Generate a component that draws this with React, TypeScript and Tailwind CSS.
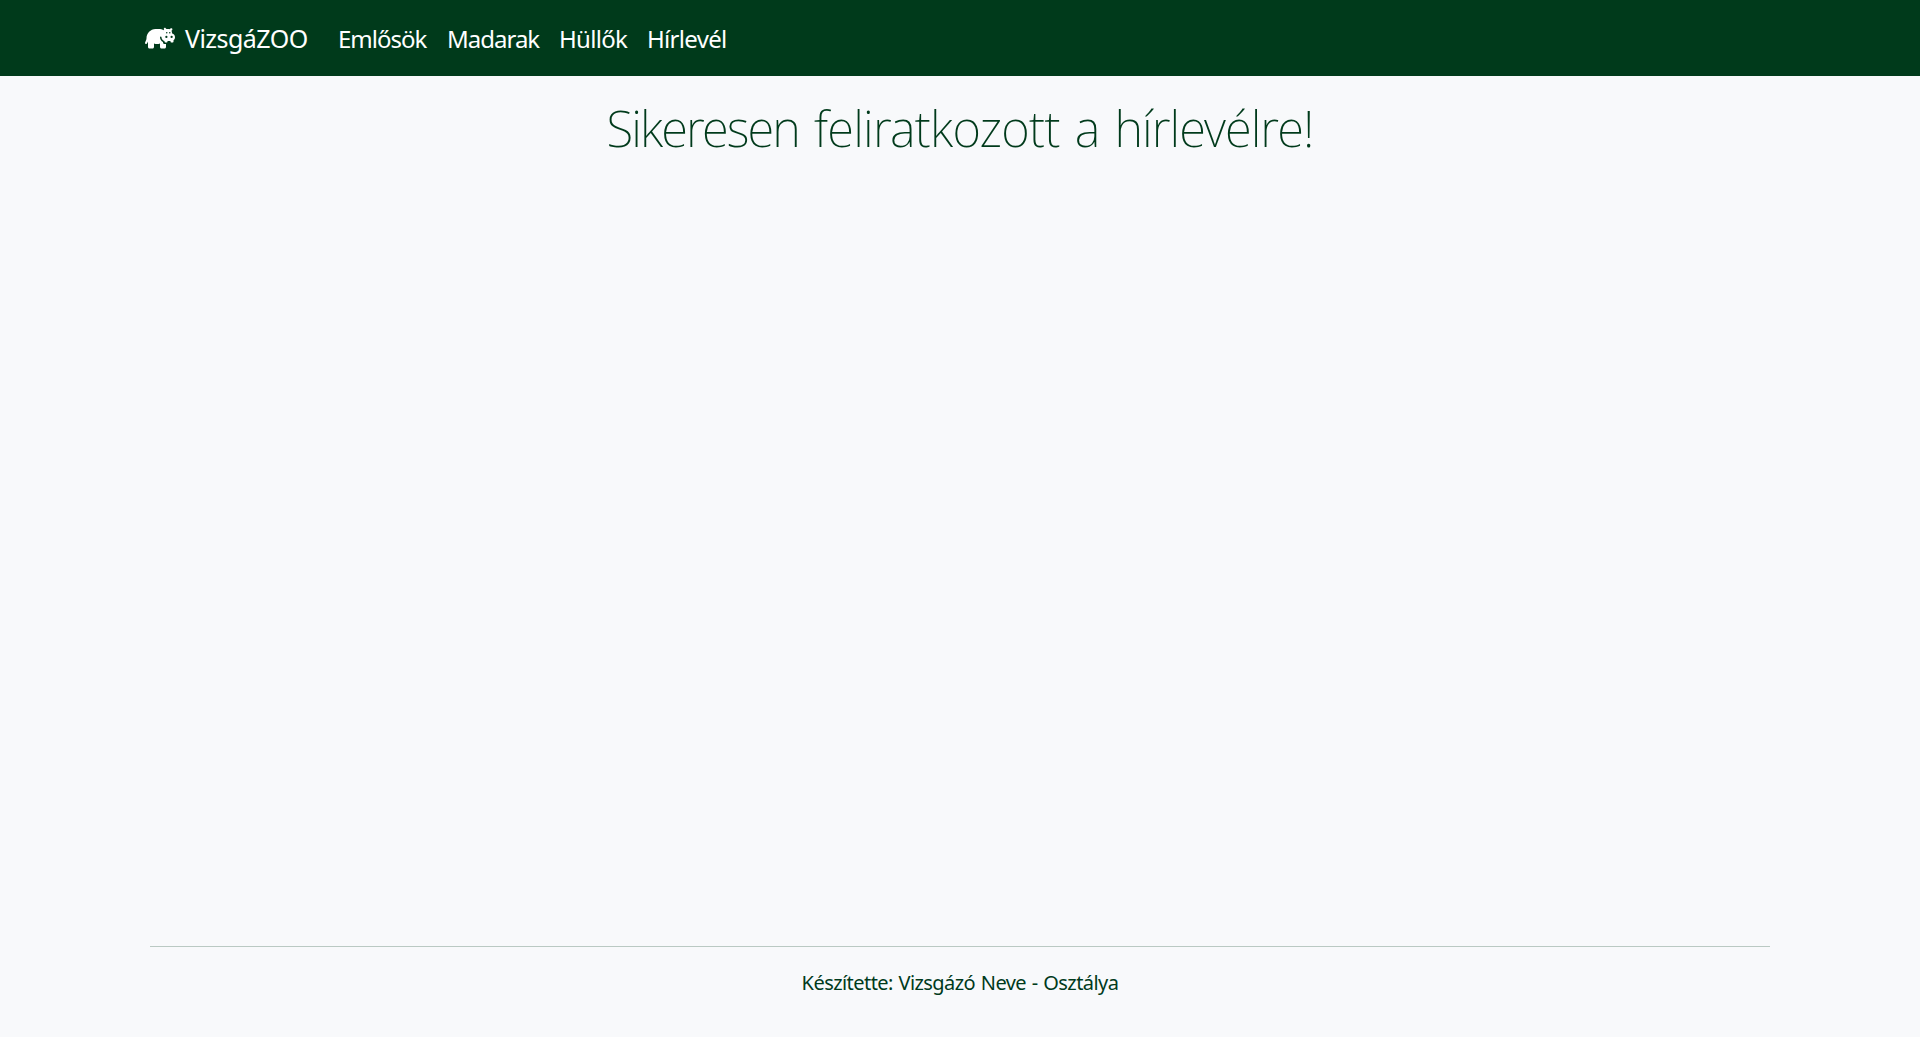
import { FaHippo } from "react-icons/fa6";

export default function App() {
  return (
    <div className="flex h-[1037px] flex-col bg-[#f8f9fb] font-['Noto_Sans',sans-serif] text-[#003a1b]">
      <nav className="flex h-[76px] shrink-0 items-center bg-[#003a1b] pl-[145px] text-[24px] leading-9 text-white">
        <a href="#" className="flex w-[193px] items-center text-[25px]">
          <FaHippo className="mr-[10px] h-6 w-[30px]" />
          <span className="tracking-[-0.55px]">VizsgáZOO</span>
        </a>
        <a href="#" className="w-[109px] pt-px tracking-[-1px]">Emlősök</a>
        <a href="#" className="w-[112px] pt-px tracking-[-1px]">Madarak</a>
        <a href="#" className="w-[88px] pt-px tracking-[-0.7px]">Hüllők</a>
        <a href="#" className="pt-px tracking-[-0.7px]">Hírlevél</a>
      </nav>
      <main className="flex grow justify-center pt-[22px]">
        <h1 className="text-[49px] leading-[60px] font-extralight tracking-[-0.75px] [word-spacing:3px]">
          <span className="tracking-[-1.9px]">Sikeresen</span> feliratkozott a <span className="tracking-[-0.95px]">hírlevélre!</span>
        </h1>
      </main>
      <footer className="mx-[150px] h-[91px] shrink-0 border-t border-[#bac9c3] pt-[21px] text-center text-[20px] leading-[30px]">
        <span className="tracking-[-0.56px] [word-spacing:1px]">Készítette: Vizsgázó Neve - Osztálya</span>
      </footer>
    </div>
  );
}
